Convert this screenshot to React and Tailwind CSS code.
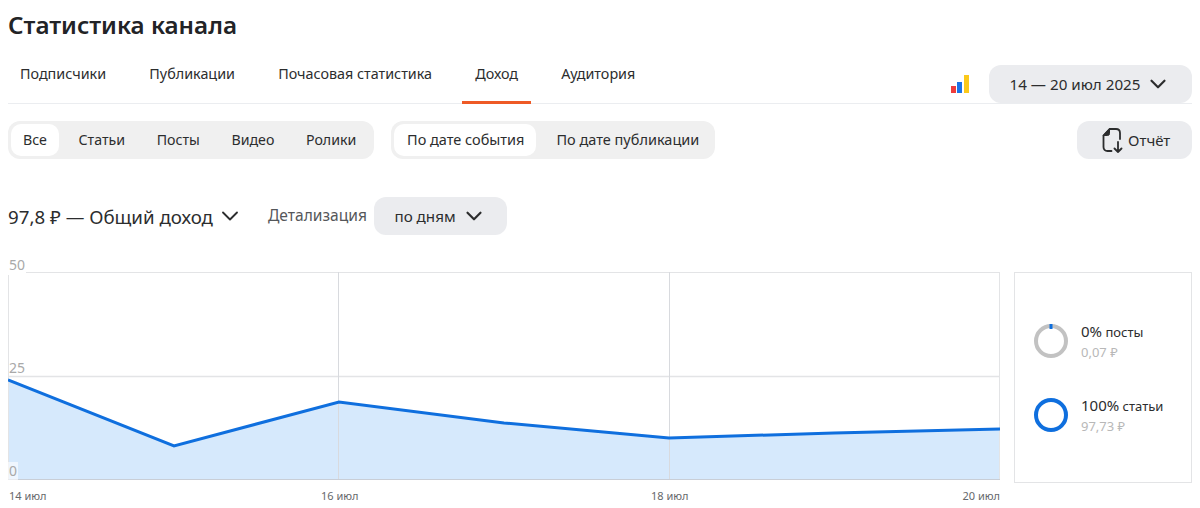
import { ChevronDown } from "lucide-react";

const tabs = ["Подписчики", "Публикации", "Почасовая статистика", "Доход", "Аудитория"];
const kinds = ["Все", "Статьи", "Посты", "Видео", "Ролики"];
const dateLabels = ["14 июл", "16 июл", "18 июл", "20 июл"];

// chart points in chart coordinates, 992 x 208
const points = "0,108 166,174 331,130 496,151 661,166 826,161 992,157";

function ReportIcon() {
  return (
    <svg width="24" height="26" viewBox="0 0 24 26" fill="none" stroke="#2c2d2e" strokeWidth="1.8" strokeLinecap="round" strokeLinejoin="round">
      <path d="M9.5 24H5.5C3 24 1.5 22.5 1.5 20V8.5L7.5 2H14C16.5 2 18 3.5 18 6V12" />
      <path d="M1.5 8.5H5.5C6.8 8.5 7.5 7.8 7.5 6.5V2Z" fill="#2c2d2e" strokeWidth="1" />
      <path d="M16 15V25M12.5 21.5L16 25L19.5 21.5" />
    </svg>
  );
}

function Ring({ color, tick }) {
  return (
    <svg width="36" height="36" viewBox="0 0 36 36" fill="none" className="shrink-0">
      <circle cx="18" cy="18" r="15" stroke={color} strokeWidth="4" />
      {tick && <path d="M18 1V6" stroke="#0f6fde" strokeWidth="3" />}
    </svg>
  );
}

function Share({ percent, name, value, color, tick }) {
  return (
    <div className="flex items-center gap-[12px]">
      <Ring color={color} tick={tick} />
      <div className="pt-[2px]">
        <div className="text-[#2c2d2e] text-[13px] leading-[20px]">
          <span className="text-[15px]">{percent}</span> {name}
        </div>
        <div className="text-[#b8b8b8] text-[13px] leading-[20px]">{value}</div>
      </div>
    </div>
  );
}

export default function App() {
  return (
    <div className="w-[1200px] h-[508px] overflow-hidden bg-white px-2 text-[#2c2d2e] font-['Noto_Sans',sans-serif]">
      <h1 className="pt-[10px] text-[24.2px] leading-[30px] font-semibold text-[#222326]">Статистика канала</h1>

      <div className="flex justify-between h-[64px] border-b border-[#ebedf0]">
        <nav className="flex h-full -ml-px text-[14.35px] leading-[20px]">
          {tabs.map((tab) => (
            <div
              key={tab}
              className={`px-[13px] mr-[17.2px] pt-[24px] ${tab === "Доход" ? "border-b-[3px] border-[#ee5a26] h-[64px]" : ""}`}
            >
              {tab}
            </div>
          ))}
        </nav>
        <div className="flex items-end gap-[19px]">
          <svg width="20" height="18" viewBox="0 0 20 18" className="mb-[10px]">
            <rect x="1" y="11" width="5" height="7" fill="#ee3d3d" />
            <rect x="7" y="7" width="5" height="11" fill="#1a73e8" />
            <rect x="14" y="0" width="5" height="18" fill="#fbc91a" />
          </svg>
          <div className="flex items-center justify-center gap-[5px] w-[203px] h-[38px] rounded-[12px] bg-[#ebecef] text-[15.2px]">
            14 — 20 июл 2025
            <ChevronDown size={26} strokeWidth={2} />
          </div>
        </div>
      </div>

      <div className="flex items-center mt-[17px]">
        <div className="flex items-center h-[38px] w-[366px] rounded-[12px] bg-[#f0f0f0] px-[3px] text-[14.2px]">
          {kinds.map((kind) => (
            <div
              key={kind}
              className={`h-[32px] flex items-center rounded-[10px] px-[12px] mr-[7.6px] last:mr-0 ${kind === "Все" ? "bg-white" : ""}`}
            >
              {kind}
            </div>
          ))}
        </div>
        <div className="flex items-center h-[38px] rounded-[12px] bg-[#f0f0f0] px-[3px] ml-[17px] text-[14.5px]">
          <div className="h-[32px] flex items-center rounded-[10px] pl-[13px] pr-[12px] bg-white">По дате события</div>
          <div className="h-[32px] flex items-center pl-[20px] pr-[13px]">По дате публикации</div>
        </div>
        <div className="ml-auto flex items-center gap-[2px] w-[115px] h-[38px] pl-[25px] rounded-[12px] bg-[#ebecef] text-[15px]">
          <ReportIcon />
          Отчёт
        </div>
      </div>

      <div className="flex items-center mt-[38px] h-[38px]">
        <span className="pt-[3px] text-[18.7px]">97,8 ₽ — Общий доход</span>
        <ChevronDown size={28} strokeWidth={1.6} className="ml-[3px]" />
        <span className="ml-[24px] text-[15.6px] text-[#55575a]">Детализация</span>
        <div className="ml-[7px] flex items-center justify-center gap-[5px] w-[133px] h-[38px] rounded-[12px] bg-[#ebecef] text-[15.2px]">
          по дням
          <ChevronDown size={26} strokeWidth={2} />
        </div>
      </div>

      <div className="flex gap-[14px] mt-[37px]">
        <div className="w-[992px]">
          <div className="relative h-[209px]">
            <svg width="992" height="209" viewBox="0 0 992 209" className="block">
              <polygon points={`${points} 992,208 0,208`} fill="#d6e9fc" />
              <rect x="0.5" y="0.5" width="991" height="207" fill="none" stroke="#e3e4e6" />
              <path d="M0 104.5H992" stroke="#e3e4e6" strokeWidth="1.5" />
              <path d="M330.5 0V208M661.5 0V208" stroke="#d8dade" />
              <path d="M0 207.5H992" stroke="#c9ced6" />
              <polyline points={points} fill="none" stroke="#0f6fde" strokeWidth="3" />
            </svg>
            <span className="absolute left-0 top-[-17px] px-[1px] bg-white text-[14px] leading-[20px] text-[#a9a9a9]">50</span>
            <span className="absolute left-0 top-[86px] px-[1px] text-[14px] leading-[20px] text-[#a9a9a9]">25</span>
            <span className="absolute left-0 top-[190px] px-[1px] bg-white/60 text-[14px] leading-[18px] text-[#a9a9a9]">0</span>
          </div>
          <div className="grid grid-cols-[312px_330px_1fr_auto] mt-[7px] pl-[1px] text-[11px] leading-[16px] text-[#66686b]">
            {dateLabels.map((label) => (
              <span key={label}>{label}</span>
            ))}
          </div>
        </div>
        <div className="w-[178px] h-[211px] border border-[#e3e4e6] flex flex-col justify-center gap-[31px] pl-[18px]">
          <Share percent="0%" name="посты" value="0,07 ₽" color="#c2c2c2" tick />
          <Share percent="100%" name="статьи" value="97,73 ₽" color="#0f6fde" />
        </div>
      </div>
    </div>
  );
}
